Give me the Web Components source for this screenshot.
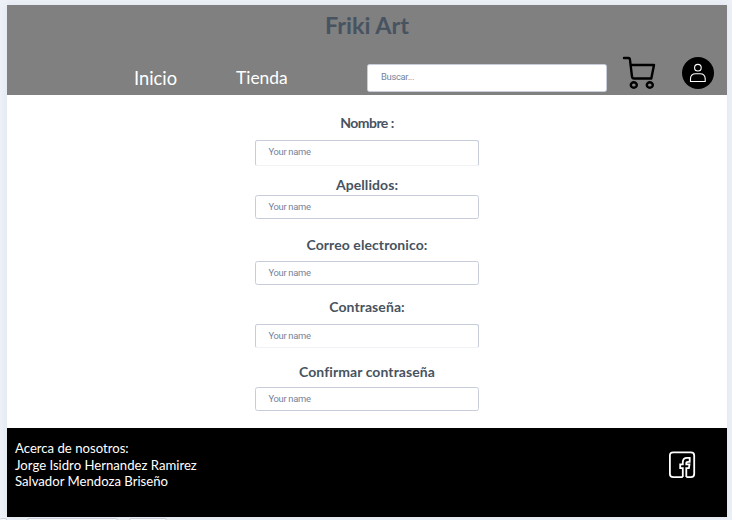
<!DOCTYPE html>
<html lang="es"><head><meta charset="utf-8"><title>Friki Art</title>
<style>
html,body{margin:0;height:520px;overflow:hidden}
body{background:#edf1f7;font-family:Lato,"Liberation Sans",sans-serif;color:#475360}
</style></head><body>
<friki-page></friki-page>
<script>
const define=(name,html)=>customElements.define(name,class extends HTMLElement{
  constructor(){super();const t=document.createElement('template');t.innerHTML=html;
    this.attachShadow({mode:'open'}).append(t.content.cloneNode(true));}
});

define('nav-link',`<style>:host{display:block;color:#fff;font-size:18.3px;line-height:22px;white-space:nowrap}</style><slot></slot>`);

define('text-box',`<style>
:host{display:block;box-sizing:border-box;height:var(--h,24px);border:1px solid #c7cddb;border-bottom-color:var(--bottom,#c7cddb);border-radius:2.5px;background:#fff;
color:#74839b;font:9.4px/11px Roboto,sans-serif;letter-spacing:-.3px;padding:var(--pt,5px) 0 0 12.5px;white-space:nowrap}
</style><slot></slot>`);

define('form-field',`<style>
:host{display:block;width:224px}
.label{font-weight:700;font-size:var(--size,14px);letter-spacing:var(--track,.08px);line-height:18px;text-align:center;white-space:nowrap;margin-bottom:var(--gap,8px)}
</style><div class="label"><slot name="label"></slot></div><text-box><slot></slot></text-box>`);

define('cart-icon',`<style>:host,svg{display:block;width:34px;height:34px}</style>
<svg viewBox="0 0 34 34" fill="none" stroke="#000" stroke-width="2.4" stroke-linejoin="round" stroke-linecap="round"><path d="M2 2h4.5Q7.8 2 8 4l2 16.5q.3 2 2 2h17.3L32 9H8.5"/><ellipse cx="11.8" cy="29" rx="3" ry="2.7"/><ellipse cx="27.8" cy="29" rx="3" ry="2.7"/></svg>`);

define('user-icon',`<style>:host,svg{display:block;width:32px;height:32px}</style>
<svg viewBox="0 0 32 32"><circle cx="16" cy="16" r="16"/><g fill="none" stroke="#fff" stroke-width="1.1"><circle cx="15.9" cy="10.7" r="3.3"/><path d="M8.5 24.5v-2.7q0-5.1 5.2-5.1h4.3q5.2 0 5.2 5.1v2.7z"/></g></svg>`);

define('facebook-icon',`<style>:host,svg{display:block;width:27px;height:28px}</style>
<svg viewBox="0 0 27 28" fill="none" stroke="#fff" stroke-width="1.8"><path d="M13.8 26.2H4.2Q.9 26.2.9 23V4.5Q.9 1.3 4.2 1.3h17.7q3.3 0 3.3 3.2V23q0 3.2-3.3 3.2h-4.6"/><path d="M13.8 26V17.2h-2.6v-3.8h2.6v-2.3q0-4.3 4.4-4.3h2.5v4H19q-1.7 0-1.7 1.4v1.2h3.2l-.6 3.8h-2.6V26"/></svg>`);

define('site-header',`<style>
:host{display:flex;flex-direction:column;height:90px;background:#808080}
.title{font-weight:700;font-size:23.4px;line-height:28px;text-align:center;padding-top:6px;height:45px}
.row{display:flex;align-items:flex-start}
.home{margin:11px 0 0 127px;width:102px}.shop{margin:11px 0 0;width:131px;font-size:17.4px}
text-box{width:240px;margin-top:8px;--h:28px;--pt:6px;padding-left:13px}
cart-icon{margin:0 0 0 15px}user-icon{margin:1px 0 0 26px}
</style><div class="title">Friki Art</div><div class="row"><nav-link class="home">Inicio</nav-link><nav-link class="shop">Tienda</nav-link><text-box>Buscar...</text-box><cart-icon></cart-icon><user-icon></user-icon></div>`);

define('signup-form',`<style>
:host{display:flex;flex-direction:column;align-items:center;height:314px;padding-top:19px;background:#fff}
.a{--h:26px;--bottom:#f1f2f5;--gap:8px;--size:14px;--track:-.55px}
.b{margin-top:10px;--gap:1px}
.c{margin-top:17px;--gap:7px}
.d{margin-top:13px;--gap:8px;--bottom:#f1f2f5}
.e{margin-top:15px;--gap:6px}
</style>
<form-field class="a"><span slot="label">Nombre :</span>Your name</form-field>
<form-field class="b"><span slot="label">Apellidos:</span>Your name</form-field>
<form-field class="c"><span slot="label">Correo electronico:</span>Your name</form-field>
<form-field class="d"><span slot="label">Contraseña:</span>Your name</form-field>
<form-field class="e"><span slot="label">Confirmar contraseña</span>Your name</form-field>`);

define('site-footer',`<style>
:host{display:flex;justify-content:space-between;height:89px;background:#000;color:#fff}
.about{font-size:13.15px;line-height:16.5px;padding:12px 0 0 8px;white-space:nowrap}
facebook-icon{margin:23px 31px 0 0}
</style><div class="about">Acerca de nosotros:<br>Jorge Isidro Hernandez Ramirez<br>Salvador Mendoza Briseño</div><facebook-icon></facebook-icon>`);

define('friki-page',`<style>
:host{display:block;height:520px;padding:5px 5px 0 7px;box-sizing:border-box;overflow:hidden}
main{box-shadow:0 0 7px #bac5d650;height:512px}
.tabs{display:flex;margin-left:-7px;padding-top:1px}
.tabs i{box-sizing:border-box;height:9px;border:1px solid #cbd1db;border-radius:2px;background:#f8f9fb}
.tabs i:nth-child(1){width:7px;border-left:0}.tabs i:nth-child(2){width:91px;margin-left:20px}.tabs i:nth-child(3){width:38px;margin-left:11px}
</style><main><site-header></site-header><signup-form></signup-form><site-footer></site-footer></main><div class="tabs"><i></i><i></i><i></i></div>`);
</script></body></html>
